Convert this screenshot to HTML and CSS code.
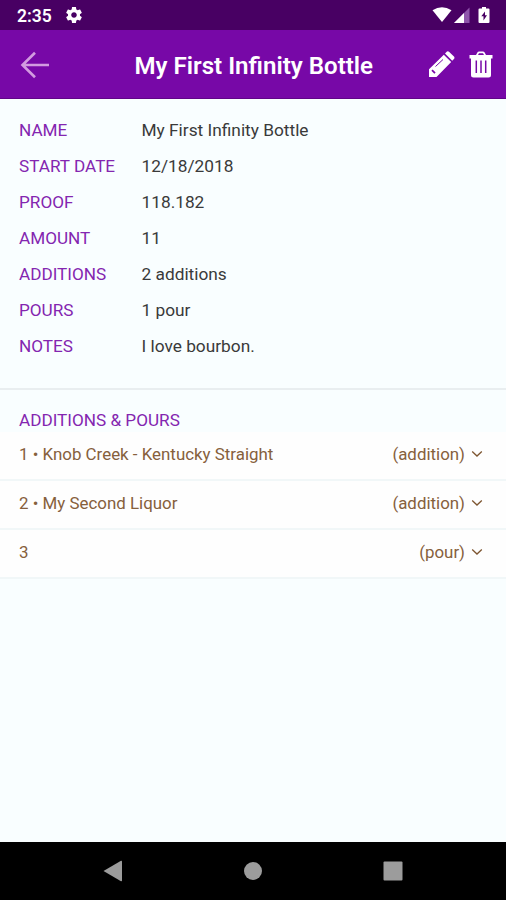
FILE: index.html
```html
<!DOCTYPE html>
<html lang="en">
<head>
<meta charset="utf-8">
<title>My First Infinity Bottle</title>
<link rel="stylesheet" href="styles.css">
</head>
<body>
<div class="status">
  <span class="time">2:35</span>
  <svg class="gear" width="16" height="16" viewBox="2 2 20 20"><path fill="#fff" d="M19.43 12.98c.04-.32.07-.64.07-.98s-.03-.66-.07-.98l2.11-1.65c.19-.15.24-.42.12-.64l-2-3.46c-.12-.22-.39-.3-.61-.22l-2.49 1c-.52-.4-1.08-.73-1.69-.98l-.38-2.65C14.46 2.18 14.25 2 14 2h-4c-.25 0-.46.18-.49.42l-.38 2.65c-.61.25-1.17.59-1.69.98l-2.49-1c-.23-.09-.49 0-.61.22l-2 3.46c-.13.22-.07.49.12.64l2.11 1.65c-.04.32-.07.65-.07.98s.03.66.07.98l-2.11 1.65c-.19.15-.24.42-.12.64l2 3.46c.12.22.39.3.61.22l2.49-1c.52.4 1.08.73 1.69.98l.38 2.65c.03.24.24.42.49.42h4c.25 0 .46-.18.49-.42l.38-2.65c.61-.25 1.17-.59 1.69-.98l2.49 1c.23.09.49 0 .61-.22l2-3.46c.12-.22.07-.49-.12-.64l-2.11-1.65zM12 15.5c-1.93 0-3.5-1.57-3.5-3.5s1.57-3.5 3.5-3.5 3.5 1.57 3.5 3.5-1.57 3.5-3.5 3.5z"/></svg>
  <svg class="signals" width="60" height="18" viewBox="0 0 60 18">
    <path fill="#fff" d="M1.500 4.200Q11-1.500 20.500 4.200L11 16Z"/>
    <path fill="#8f55ab" d="M38.500 1.500V17H23Z"/>
    <path fill="#fff" d="M33 7V17H23Z"/>
    <path fill="#fff" d="M48.500 2.500h2.500V1h4v1.500h2.500q1 0 1 1V16q0 1-1 1h-9q-1 0-1-1V3.500q0-1 1-1Z"/>
    <path fill="#480063" d="M54 5.500L50.300 10.300h2.200V14.500L56 9.300h-2Z"/>
  </svg>
</div>
<header class="bar">
  <svg class="back" width="30" height="28" viewBox="0 0 30 28"><path fill="none" stroke="#d29be0" stroke-width="2.600" d="M15 1.700L2.500 14L15 26.300M2.500 14H29"/></svg>
  <h1 class="title">My First Infinity Bottle</h1>
  <svg class="pencil" width="27" height="27" viewBox="0 0 27 27">
    <path fill="#fff" d="M1 26V18.300L15.800 3.700L23.200 10.900L8.500 26ZM17 2.500L19 .6Q20 0 21 .7L26.200 5.700Q26.800 6.600 26.200 7.700L24.200 9.800Z"/>
    <path fill="none" stroke="#7708a7" d="M7.500 15.500L15 8.500"/>
    <path fill="none" stroke="#7708a7" stroke-width="1.800" d="M4 19.200L7 22.200"/>
  </svg>
  <svg class="trash" width="24" height="27" viewBox="0 0 24 27">
    <path fill="#fff" fill-rule="evenodd" d="M.5 4H7L8.700 1Q9 .5 10 .5H14Q15 .5 15.300 1L17 4H23.500V7.500H22V24Q22 26.500 19.500 26.500H4.500Q2 26.500 2 24V7.500H.5ZM9 4H15L14 2.300H10Z"/>
    <path fill="none" stroke="#7708a7" stroke-width="1.500" d="M7.300 9.500V22M12 9.500V22M16.700 9.500V22"/>
  </svg>
</header>
<main class="content">
  <dl class="details">
    <dt>NAME</dt><dd>My First Infinity Bottle</dd>
    <dt>START DATE</dt><dd>12/18/2018</dd>
    <dt>PROOF</dt><dd>118.182</dd>
    <dt>AMOUNT</dt><dd>11</dd>
    <dt>ADDITIONS</dt><dd>2 additions</dd>
    <dt>POURS</dt><dd>1 pour</dd>
    <dt>NOTES</dt><dd>I love bourbon.</dd>
  </dl>
  <h2 class="heading">ADDITIONS &amp; POURS</h2>
  <ul class="list">
    <li><span>1 • Knob Creek - Kentucky Straight</span><span class="kind">(addition)</span><svg class="chev" width="12" height="8" viewBox="0 0 12 8"><path d="M1.200 1.500L6 6L10.800 1.500"/></svg></li>
    <li><span>2 • My Second Liquor</span><span class="kind">(addition)</span><svg class="chev" width="12" height="8" viewBox="0 0 12 8"><path d="M1.200 1.500L6 6L10.800 1.500"/></svg></li>
    <li><span>3</span><span class="kind">(pour)</span><svg class="chev" width="12" height="8" viewBox="0 0 12 8"><path d="M1.200 1.500L6 6L10.800 1.500"/></svg></li>
  </ul>
</main>
<nav class="nav">
  <svg width="20" height="22" viewBox="0 0 20 22"><path fill="#9c9c9c" d="M.5 11L18 .8Q19 .5 19 1.500V20.500Q19 21.500 18 21.200Z"/></svg>
  <svg width="20" height="20" viewBox="0 0 20 20"><circle cx="10" cy="10" r="9" fill="#9c9c9c"/></svg>
  <svg width="20" height="20" viewBox="0 0 20 20"><rect x=".5" y=".5" width="19" height="19" rx="1" fill="#9c9c9c"/></svg>
</nav>
</body>
</html>
```
FILE: styles.css
```css
* { box-sizing: border-box; }
body {
  margin: 0;
  height: 900px;
  display: flex;
  flex-direction: column;
  font-family: Roboto, sans-serif;
  font-size: 17px;
  background: #f9feff;
  overflow: hidden;
}
.status {
  height: 30px;
  background: #480063;
  display: flex;
  align-items: center;
  padding: 0 15px 0 17px;
}
.time { color: #fff; font-weight: 600; font-size: 17.500px; width: 49px; padding-top: 2px; }
.signals { margin-left: auto; }
.bar {
  height: 69px;
  background: #7708a7;
  border-bottom: 1px solid #600587;
  display: flex;
  align-items: center;
  padding: 0 13px 0 20px;
}
.back { margin-top: 1px; }
.title {
  flex: 1;
  margin: 0 0 0 84.500px;
  padding-top: 4px;
  color: #fff;
  font-size: 24.100px;
  font-weight: 600;
  white-space: nowrap;
}
.pencil { margin-right: 14px; }
.content { flex: 1; }
.details {
  margin: 0;
  padding: 13px 19px 24px;
  display: grid;
  grid-template-columns: 122.500px 1fr;
  grid-auto-rows: 36px;
  line-height: 36px;
  border-bottom: 2px solid #e9eef0;
}
.details dt { color: #8426b0; font-size: 17.150px; }
.details dd { margin: 0; color: #3a3a3a; font-size: 17.300px; }
.heading {
  margin: 0;
  height: 42px;
  padding: 19px 19px 0;
  font-size: 17.150px;
  font-weight: 400;
  line-height: 23px;
  color: #8426b0;
}
.list { margin: 0; padding: 0; list-style: none; font-size: 16.900px; }
.list li {
  height: 49px;
  padding: 0 23px 4px 19px;
  display: flex;
  align-items: center;
  background: #fefefe;
  border-bottom: 2px solid #f1f7f8;
  color: #86603c;
}
.kind { margin-left: auto; margin-right: 6px; }
.chev path { fill: none; stroke: #7d5530; stroke-width: 1.300; }
.nav {
  height: 58px;
  background: #000;
  display: flex;
  align-items: center;
  justify-content: space-between;
  padding: 0 103px;
}
```
